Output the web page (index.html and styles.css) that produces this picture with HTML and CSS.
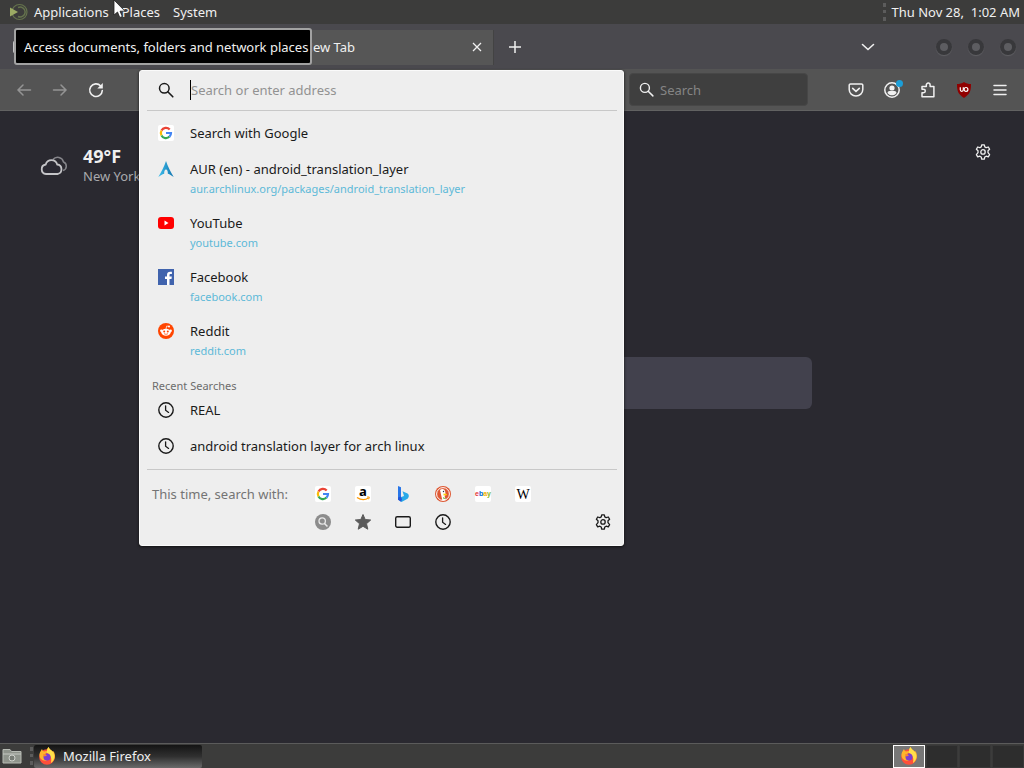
FILE: index.html
```html
<!DOCTYPE html>
<html lang="en">
<head>
  <meta charset="UTF-8" />
  <title>Mozilla Firefox</title>
  <meta name="viewport" content="width=device-width, initial-scale=1.0" />
  <link rel="stylesheet" href="styles.css">
</head>
<body>

  <!-- shared icons -->
  <svg class="sprite" aria-hidden="true">
    <symbol id="search" viewBox="0 0 16 16"><circle cx="6.3" cy="6.3" r="4.8" fill="none" stroke="currentColor" stroke-width="1.5"/><path d="M9.8 9.8l5 5" fill="none" stroke="currentColor" stroke-width="1.6" stroke-linecap="round"/></symbol>
    <symbol id="clock" viewBox="0 0 16 16"><circle cx="8" cy="8" r="7.2" fill="none" stroke="currentColor" stroke-width="1.4"/><path d="M7.6 3.8v4.4l3 2.2" fill="none" stroke="currentColor" stroke-width="1.3" stroke-linecap="round"/></symbol>
    <symbol id="gear" viewBox="0 0 16 16"><path d="M6.7.8h2.6l.5 2.1 1.4.8 2.1-.7 1.3 2.3L13 6.8v1.9l1.6 1.9-1.3 2.3-2.1-.7-1.4.8-.5 2.2H6.7l-.5-2.2-1.4-.8-2.1.7-1.3-2.3L3 8.7V6.8L1.4 5.3 2.7 3l2.1.7 1.4-.8z" fill="none" stroke="currentColor" stroke-width="1.3" stroke-linejoin="round"/><circle cx="8" cy="7.9" r="2.2" fill="none" stroke="currentColor" stroke-width="1.3"/></symbol>
    <symbol id="google" viewBox="0 0 16 16"><rect width="16" height="16" rx="2" fill="#fff"/><g fill="none" stroke-width="2.2"><path d="M3.5 5.6A5 5 0 0 1 11.7 4.5" stroke="#ea4335"/><path d="M3.500 10.400a5 5 0 0 1 0-4.800" stroke="#fbbc05"/><path d="M11.500 11.600a5 5 0 0 1-8-1.200" stroke="#34a853"/><path d="M8 8h5a5 5 0 0 1-1.500 3.600" stroke="#4285f4"/></g></symbol>
    <symbol id="firefox" viewBox="0 0 18 18"><circle cx="9" cy="10" r="7.800" fill="#ff4f3a"/><path d="M1.500 7C2 4.500 3.500 3 4 2c.5 1.500 1 2 2 2.500C7.500 3.500 9 4 9 4 8.500 2 10 .7 10.500 0c.8 2.500 3 3 4.500 5l.4-1C18 8 17.500 13 13 16c4-6-1-11-4-10C6 7 5 12 9 13.500 4 14.500 1 11 1.500 7z" fill="#ffb52b"/><path d="M10.500 0c.8 2.500 3 3 4.500 5 3 5 0 9-2 11 1-4 0-8-4-10C8.500 3 10 1 10.500 0z" fill="#ffe04a"/><circle cx="9" cy="10" r="3.500" fill="#7a3fd0"/><path d="M5 7.500c2-1 3 0 4 1-1 .2-1.500 1-2.500 1z" fill="#ff852d"/></symbol>
  </svg>

  <nav class="panel top-panel">
    <svg class="distro" width="20" height="18" viewBox="0 0 20 18"><circle cx="10.500" cy="9" r="7.500" fill="none" stroke="#65734d" stroke-width="1.200"/><path d="M9 4.500a5 5 0 1 1 0 9" fill="none" stroke="#65734d" stroke-width="1.500"/><path d="M1 4.500l8 4.500-8 4.500z" fill="#9cab64"/></svg>
    <button>Applications</button>
    <button>Places</button>
    <button>System</button>
    <span class="grip clock-grip"></span>
    <time>Thu Nov 28,&nbsp; 1:02 AM</time>
  </nav>

  <div class="browser">
    <div class="tab-bar">
      <button class="icon-btn view-btn" aria-label="Firefox View"><svg width="16" height="16" viewBox="0 0 16 16"><rect x="1" y="2" width="14" height="12" rx="2" fill="none" stroke="currentColor" stroke-width="1.500"/></svg></button>
      <div class="tab"></div>
      <div class="tab">
        <span>New Tab</span>
        <button class="icon-btn close" aria-label="Close tab"><svg width="10" height="10" viewBox="0 0 10 10"><path d="M1 1l8 8M9 1l-8 8" stroke="currentColor" stroke-width="1.300"/></svg></button>
      </div>
      <button class="icon-btn add" aria-label="New tab"><svg width="14" height="14" viewBox="0 0 14 14"><path d="M7 1v12M1 7h12" stroke="currentColor" stroke-width="1.500"/></svg></button>
      <button class="icon-btn all-tabs" aria-label="List all tabs"><svg width="14" height="8" viewBox="0 0 14 8"><path d="M1.500 1.500L7 6.500l5.500-5" fill="none" stroke="currentColor" stroke-width="1.600" stroke-linecap="round"/></svg></button>
      <div class="window-buttons">
        <button aria-label="Minimize"></button>
        <button aria-label="Maximize"></button>
        <button aria-label="Close"></button>
      </div>
    </div>

    <div class="toolbar">
      <button class="icon-btn off" aria-label="Back"><svg width="16" height="14" viewBox="0 0 16 14"><path d="M7 2L2 7l5 5M2 7h12.500" fill="none" stroke="currentColor" stroke-width="1.500" stroke-linecap="round"/></svg></button>
      <button class="icon-btn off" aria-label="Forward"><svg width="16" height="14" viewBox="0 0 16 14"><path d="M9 2l5 5-5 5M14 7H1.500" fill="none" stroke="currentColor" stroke-width="1.500" stroke-linecap="round"/></svg></button>
      <button class="icon-btn" aria-label="Reload"><svg width="16" height="16" viewBox="0 0 16 16"><path d="M12.700 4A6.300 6.300 0 1 0 14.300 8.500" fill="none" stroke="currentColor" stroke-width="1.600" stroke-linecap="round"/><path d="M14.800 1v5.500H9.300z" fill="currentColor"/></svg></button>

      <div class="urlbar">
        <div class="popup">
          <div class="address">
            <svg width="16" height="16"><use href="#search"/></svg>
            <input type="text" aria-label="Address" placeholder="Search or enter address">
          </div>
          <ul class="results">
            <li><a href="#">
              <svg width="16" height="16"><use href="#google"/></svg>
              <span class="title">Search with Google</span>
            </a></li>
            <li><a href="#" class="with-url">
              <svg width="16" height="16" viewBox="0 0 16 16"><defs><linearGradient id="aur"><stop offset="0" stop-color="#3fc0ee"/><stop offset="1" stop-color="#1173ae"/></linearGradient></defs><path d="M8 0C6.300 5 3.500 11 .3 16 3 14 5 13 6.200 12.700 6 10.500 6.800 8.500 8 8.500s2 2 1.800 4.200C11 13 13 14 15.700 16 12.500 11 9.700 5 8 0z" fill="url(#aur)"/></svg>
              <span class="title">AUR (en) - android_translation_layer</span>
              <span class="url">aur.archlinux.org/packages/android_translation_layer</span>
            </a></li>
            <li><a href="#" class="with-url">
              <svg width="16" height="16" viewBox="0 0 16 16"><rect x="0" y="2" width="16" height="12" rx="3" fill="#f00"/><path d="M6.500 5.500v5L10.500 8z" fill="#fff"/></svg>
              <span class="title">YouTube</span>
              <span class="url">youtube.com</span>
            </a></li>
            <li><a href="#" class="with-url">
              <svg width="16" height="16" viewBox="0 0 16 16"><rect width="16" height="16" fill="#4063ad"/><path d="M9 16v-6H7V7.600h2V6c0-2.200 1.200-3.300 3.200-3.300.8 0 1.500.1 1.700.1V5h-1.200c-1 0-1.200.5-1.200 1.200v1.400h2.300l-.3 2.400h-2v6z" fill="#fff"/></svg>
              <span class="title">Facebook</span>
              <span class="url">facebook.com</span>
            </a></li>
            <li><a href="#" class="with-url">
              <svg width="16" height="16" viewBox="0 0 16 16"><circle cx="8" cy="8" r="8" fill="#ff4500"/><ellipse cx="8" cy="9.200" rx="4.700" ry="3.500" fill="#fff"/><circle cx="3.400" cy="7.800" r="1.300" fill="#fff"/><circle cx="12.600" cy="7.800" r="1.300" fill="#fff"/><circle cx="11" cy="3.500" r="1" fill="#fff"/><path d="M8 6l.7-3 2.300.5" fill="none" stroke="#fff" stroke-width=".7"/><circle cx="6.200" cy="8.500" r="1" fill="#ff4500"/><circle cx="9.800" cy="8.500" r="1" fill="#ff4500"/><path d="M6 10.700q2 1.300 4 0" fill="none" stroke="#ff4500" stroke-width=".7"/></svg>
              <span class="title">Reddit</span>
              <span class="url">reddit.com</span>
            </a></li>
            <li class="group-label">Recent Searches</li>
            <li><a href="#">
              <svg width="16" height="16"><use href="#clock"/></svg>
              <span class="title">REAL</span>
            </a></li>
            <li><a href="#">
              <svg width="16" height="16"><use href="#clock"/></svg>
              <span class="title">android translation layer for arch linux</span>
            </a></li>
          </ul>
          <div class="one-offs">
            <span class="one-offs-label">This time, search with:</span>
            <div class="engines">
              <button aria-label="Google"><svg width="16" height="16"><use href="#google"/></svg></button>
              <button aria-label="Amazon"><svg width="16" height="16" viewBox="0 0 16 16"><rect width="16" height="16" rx="2" fill="#fff"/><text x="8" y="10" text-anchor="middle" class="amazon">a</text><path d="M2 11.500q6 4 11.500.5" fill="none" stroke="#f90" stroke-width="1.300"/><path d="M12 11h2.300l-.6 2.300" fill="none" stroke="#f90"/></svg></button>
              <button aria-label="Bing"><svg width="16" height="16" viewBox="0 0 16 16"><path d="M3 0l3 1.200v10L3 14z" fill="#2876e8"/><path d="M3 13.200l4-2.500 2-.7-1.500-4.700 5 2.200c2 1.500 1.500 4 0 5.200L6.500 16z" fill="#28a9e8"/><path d="M3 11.500l3-1 1 3-1 2.200-3-2z" fill="#2355d8"/></svg></button>
              <button aria-label="DuckDuckGo"><svg width="16" height="16" viewBox="0 0 16 16"><circle cx="8" cy="8" r="8" fill="#de5833"/><circle cx="8" cy="8" r="6.400" fill="none" stroke="#fff"/><path d="M5 4c2-2 5-1 5.300 2l.3 3-1 1 1.200 4c-1.300.5-2.500.5-3.500.2z" fill="#fff"/><path d="M8.500 7.500l3.500.6-.5 1.200-3 .3z" fill="#fdd20a"/><circle cx="8.500" cy="5.500" r=".7" fill="#234"/><path d="M8 11l3 1.500-2.500.5z" fill="#65bc46"/></svg></button>
              <button aria-label="eBay"><svg width="16" height="16" viewBox="0 0 16 16"><rect width="16" height="16" rx="2" fill="#fff"/><text x="8" y="10" text-anchor="middle" class="ebay"><tspan fill="#e53238">e</tspan><tspan fill="#0064d2">b</tspan><tspan fill="#f5af02">a</tspan><tspan fill="#86b817">y</tspan></text></svg></button>
              <button aria-label="Wikipedia"><svg width="16" height="16" viewBox="0 0 16 16"><rect width="16" height="16" rx="2" fill="#fff"/><text x="8" y="13" text-anchor="middle" class="wiki">W</text></svg></button>
              <button aria-label="Search"><svg width="16" height="16" viewBox="0 0 16 16"><circle cx="8" cy="8" r="8" fill="#8c8c8c"/><circle cx="7.200" cy="7" r="3.200" fill="none" stroke="#e8e8e8" stroke-width="1.300"/><path d="M9.500 9.500l3 3" stroke="#e8e8e8" stroke-width="1.500"/></svg></button>
              <button aria-label="Bookmarks"><svg width="16" height="16" viewBox="0 0 16 16"><path d="M8 .5l2.200 5 5.500.5-4.200 3.700 1.300 5.500L8 12.300l-4.800 2.900 1.300-5.500L.3 6l5.500-.5z" fill="#5b5b5b" stroke="#5b5b5b" stroke-linejoin="round"/></svg></button>
              <button aria-label="Tabs"><svg width="16" height="16" viewBox="0 0 16 16"><rect x=".7" y="2.700" width="14.600" height="10.600" rx="1.500" fill="none" stroke="currentColor" stroke-width="1.400"/></svg></button>
              <button aria-label="History"><svg width="16" height="16"><use href="#clock"/></svg></button>
            </div>
            <button class="one-offs-settings" aria-label="Search settings"><svg width="16" height="16"><use href="#gear"/></svg></button>
          </div>
        </div>
      </div>

      <div class="search-box">
        <svg width="15" height="15"><use href="#search"/></svg>
        <input type="text" aria-label="Search" placeholder="Search">
      </div>

      <button class="icon-btn" aria-label="Save to Pocket"><svg width="16" height="16" viewBox="0 0 16 16"><path d="M2.500 2h11a1.300 1.300 0 0 1 1.300 1.300v4.200a6.800 6.500 0 0 1-13.600 0V3.300A1.300 1.300 0 0 1 2.500 2z" fill="none" stroke="currentColor" stroke-width="1.500"/><path d="M4.700 6.300L8 9.300l3.300-3" fill="none" stroke="currentColor" stroke-width="1.600" stroke-linecap="round"/></svg></button>
      <button class="icon-btn account" aria-label="Account"><svg width="16" height="16" viewBox="0 0 16 16"><circle cx="8" cy="8" r="7.200" fill="none" stroke="currentColor" stroke-width="1.500"/><circle cx="8" cy="6" r="2.600" fill="currentColor"/><path d="M3.500 11c0-1.300 1-2 2-2h5c1 0 2 .7 2 2-1 1.500-2.700 2.300-4.500 2.300S4.500 12.500 3.500 11z" fill="currentColor"/></svg><span class="badge"></span></button>
      <button class="icon-btn" aria-label="Extensions"><svg width="16" height="16" viewBox="0 0 16 16"><path d="M2 14.800V10.700h1.600a1.700 1.700 0 0 0 0-3.400H2V4.600h4.300V3a1.900 1.900 0 0 1 3.800 0v1.600h3.800v10.200z" fill="none" stroke="currentColor" stroke-width="1.500" stroke-linejoin="round"/></svg></button>
      <button class="icon-btn" aria-label="uBlock Origin"><svg width="16" height="16" viewBox="0 0 16 16"><path d="M8 0c2 1.500 4.500 2 7 2 0 7-1 10-7 14C2 12 1 9 1 2c2.500 0 5-.5 7-2z" fill="#900000"/><path d="M4.300 5.300v2.500c0 2 3 2 3 0V5.300" fill="none" stroke="#fff" stroke-width="1.200"/><circle cx="10" cy="7.400" r="1.900" fill="none" stroke="#fff" stroke-width="1.200"/></svg></button>
      <button class="icon-btn" aria-label="Menu"><svg width="14" height="12" viewBox="0 0 14 12"><path d="M1 1.500h12M1 6h12M1 10.500h12" stroke="currentColor" stroke-width="1.500" stroke-linecap="round"/></svg></button>
    </div>

    <main>
      <div class="page-top">
        <div class="weather">
          <svg width="28" height="22" viewBox="0 0 28 22"><path d="M13 4.500A6 6 0 0 1 23.500 7a4.500 4.500 0 0 1-.5 8.500" fill="none" stroke="#85858a" stroke-width="1.500"/><path d="M6 19a4.800 4.800 0 0 1-.3-9.500 6 6 0 0 1 11.500 0A4.800 4.800 0 0 1 17.500 19z" fill="#2b2a33" stroke="#c5c5c8" stroke-width="1.800"/></svg>
          <div>
            <strong>49°F</strong>
            <span>New York City</span>
          </div>
        </div>
        <button class="icon-btn page-settings" aria-label="Customize page"><svg width="16" height="16"><use href="#gear"/></svg></button>
      </div>
      <input class="page-search" type="text" aria-label="Search the web">
    </main>
  </div>

  <footer class="panel bottom-panel">
    <button class="files" aria-label="File manager"><svg width="20" height="18" viewBox="0 0 20 18"><path d="M1 2.500h7l1.500 2H19V16H1z" fill="#8f948c" stroke="#b7bbb4"/><path d="M1 7h18" stroke="#c6c9c3"/><circle cx="10" cy="11" r="3" fill="#777c75" stroke="#d0d3cd"/></svg></button>
    <span class="grip"></span>
    <button class="task"><svg width="18" height="18"><use href="#firefox"/></svg>Mozilla Firefox</button>
    <div class="workspaces">
      <button class="current" aria-label="Workspace 1"><svg width="18" height="18"><use href="#firefox"/></svg></button>
      <button aria-label="Workspace 2"></button>
      <button aria-label="Workspace 3"></button>
      <button aria-label="Workspace 4"></button>
    </div>
  </footer>

  <div class="tooltip" role="tooltip">Access documents, folders and network places</div>
  <svg class="cursor" width="13" height="19" viewBox="0 0 13 19"><path d="M1 0v15l3.500-3 2.300 5.500 2.500-1-2.300-5.300H12z" fill="#fff" stroke="#222" stroke-width=".8"/></svg>

</body>
</html>
```
FILE: styles.css
```css
:root {
  --panel: #3c3c3b;
  --tabs: #4a494e;
  --toolbar: #545454;
  --page: #2a2930;
  --popup: #eeeeee;
  --ink: #1a1a1a;
  --light: #f0f0f0;
  --link: #5db9d8;
}

* {
  box-sizing: border-box;
}

body {
  margin: 0;
  height: 100vh;
  display: flex;
  flex-direction: column;
  overflow: hidden;
  font: 13px/20px "Noto Sans", sans-serif;
  color: var(--light);
  background: var(--page);
}

button, input {
  font: inherit;
  color: inherit;
  background: none;
  border: 0;
  padding: 0;
  outline: 0;
}

svg {
  display: block;
  flex: none;
  overflow: visible;
}

.sprite {
  position: absolute;
  width: 0;
  height: 0;
}

.panel {
  display: flex;
  align-items: center;
  background: var(--panel);
}

/* top panel */
.top-panel {
  height: 24px;
  padding: 0 4px 0 9px;
}

.top-panel button {
  margin-right: 13px;
}

.distro {
  margin-right: 5px;
}

.grip {
  width: 4px;
  height: 18px;
  border-left: 3px dotted #5c5c5c;
}

.clock-grip {
  margin: 0 4px 0 auto;
}

/* browser */
.browser {
  flex: 1;
  display: flex;
  flex-direction: column;
}

.icon-btn {
  width: 36px;
  height: 36px;
  display: flex;
  align-items: center;
  justify-content: center;
}

.tab-bar {
  height: 45px;
  display: flex;
  align-items: center;
  padding: 1px 8px 0 0;
  background: var(--tabs);
}

.view-btn {
  margin: 0 5px 0 3px;
}

.tab {
  width: 225px;
  height: 35px;
  display: flex;
  align-items: center;
  padding-left: 34px;
  background: #505050;
  border-right: 1px solid #434343;
}

.tab + .tab {
  background: #565656;
}

.close {
  width: 32px;
  margin-left: auto;
}

.add {
  margin-left: 3px;
}

.all-tabs {
  margin-left: auto;
}

.window-buttons {
  display: flex;
  gap: 16px;
  margin-left: 50px;
}

.window-buttons button {
  width: 16px;
  height: 16px;
  border: 4px solid #38383b;
  border-radius: 50%;
  background: #5d5d61;
  box-shadow: 0 1px 1px #606064;
}

.toolbar {
  height: 42px;
  display: flex;
  align-items: center;
  padding: 0 6px;
  background: var(--toolbar);
  border-bottom: 1px solid #626262;
}

.off {
  color: #949494;
}

.urlbar {
  flex: 1;
  align-self: stretch;
  position: relative;
  margin: 0 5px 0 25px;
}

.search-box {
  width: 179px;
  height: 33px;
  display: flex;
  align-items: center;
  gap: 6px;
  padding: 0 9px;
  margin-right: 30px;
  background: #3f3f3f;
  border: 1px solid #474747;
  border-radius: 4px;
}

.search-box input {
  flex: 1;
  min-width: 0;
}

.search-box input::placeholder {
  color: #858585;
  opacity: 1;
}

.account {
  position: relative;
}

.badge {
  position: absolute;
  top: 8px;
  right: 7px;
  width: 7px;
  height: 7px;
  border-radius: 50%;
  background: #1b9ed8;
}

/* address popup */
.popup {
  position: absolute;
  top: 1px;
  left: 0;
  right: 0;
  z-index: 2;
  padding: 0 6px 0 7px;
  color: var(--ink);
  background: var(--popup);
  border: 1px solid #fafafa;
  border-radius: 3px;
  box-shadow: 0 1px 3px #111111;
}

.address {
  height: 40px;
  display: flex;
  align-items: center;
  gap: 16px;
  padding: 0 0 2px 11px;
  border-bottom: 1px solid #c8c8c8;
}

.address input {
  flex: 1;
  height: 20px;
  border-left: 1px solid #000000;
}

.address input::placeholder {
  color: #929292;
  opacity: 1;
}

.results {
  list-style: none;
  margin: 0;
  padding: 4px 0 5px;
  border-bottom: 1px solid #c8c8c8;
}

.results a {
  display: grid;
  grid-template-columns: 16px 1fr;
  column-gap: 16px;
  align-items: center;
  padding: 8px 11px;
  color: inherit;
  text-decoration: none;
}

.results .with-url {
  padding-bottom: 6px;
}

.url {
  grid-column: 2;
  font-size: 11px;
  line-height: 20px;
  color: var(--link);
}

.group-label {
  padding: 12px 5px 0;
  font-size: 11px;
  line-height: 13px;
  color: #6c6c6c;
}

.one-offs {
  display: flex;
  align-items: flex-start;
  padding: 10px 0 9px 5px;
}

.one-offs-label {
  width: 151px;
  line-height: 28px;
  color: #747474;
}

.engines {
  display: grid;
  grid-template-columns: repeat(6, 40px);
}

.one-offs button {
  height: 28px;
  display: flex;
  align-items: center;
  justify-content: center;
}

.one-offs .one-offs-settings {
  width: 28px;
  margin-left: auto;
  align-self: flex-end;
}

.amazon {
  font: bold 13px "Open Sans", sans-serif;
}

.ebay {
  font: bold 7px "Liberation Sans", sans-serif;
}

.wiki {
  font: 14px "Liberation Serif", serif;
}

/* new tab page */
main {
  flex: 1;
  background: var(--page);
}

.page-top {
  display: flex;
  align-items: flex-start;
  justify-content: space-between;
  padding: 23px 23px 0 40px;
}

.weather {
  display: flex;
  align-items: center;
  gap: 15px;
  padding-top: 12px;
}

.weather strong {
  display: block;
  font-size: 18px;
}

.weather span {
  color: #a9a9ad;
}

.page-search {
  display: block;
  width: 600px;
  height: 52px;
  margin: 171px auto 0;
  padding: 0 16px;
  background: #42414d;
  border-radius: 6px;
}

/* bottom panel */
.bottom-panel {
  height: 25px;
  border-top: 1px solid #5b5b5b;
}

.files {
  margin: 0 8px 0 2px;
}

.task {
  width: 168px;
  height: 23px;
  display: flex;
  align-items: center;
  gap: 7px;
  padding-left: 4px;
  background: linear-gradient(#141414, #303030 50%, #6a6a6a);
  border-radius: 2px;
}

.workspaces {
  display: flex;
  gap: 1px;
  margin-left: auto;
}

.workspaces button {
  width: 32px;
  height: 23px;
  background: #2d2d2d;
  border: 1px solid #383838;
}

.workspaces .current {
  display: flex;
  align-items: center;
  justify-content: center;
  background: #777777;
  border: 1px solid #ffffff;
}

/* overlays */
.tooltip {
  position: absolute;
  top: 28px;
  left: 14px;
  z-index: 3;
  padding: 7px 2px 6px 8px;
  background: #000000;
  border: 2px solid #a2a2a2;
  border-radius: 3px;
}

.cursor {
  position: absolute;
  top: 0;
  left: 113px;
  z-index: 4;
}
```
